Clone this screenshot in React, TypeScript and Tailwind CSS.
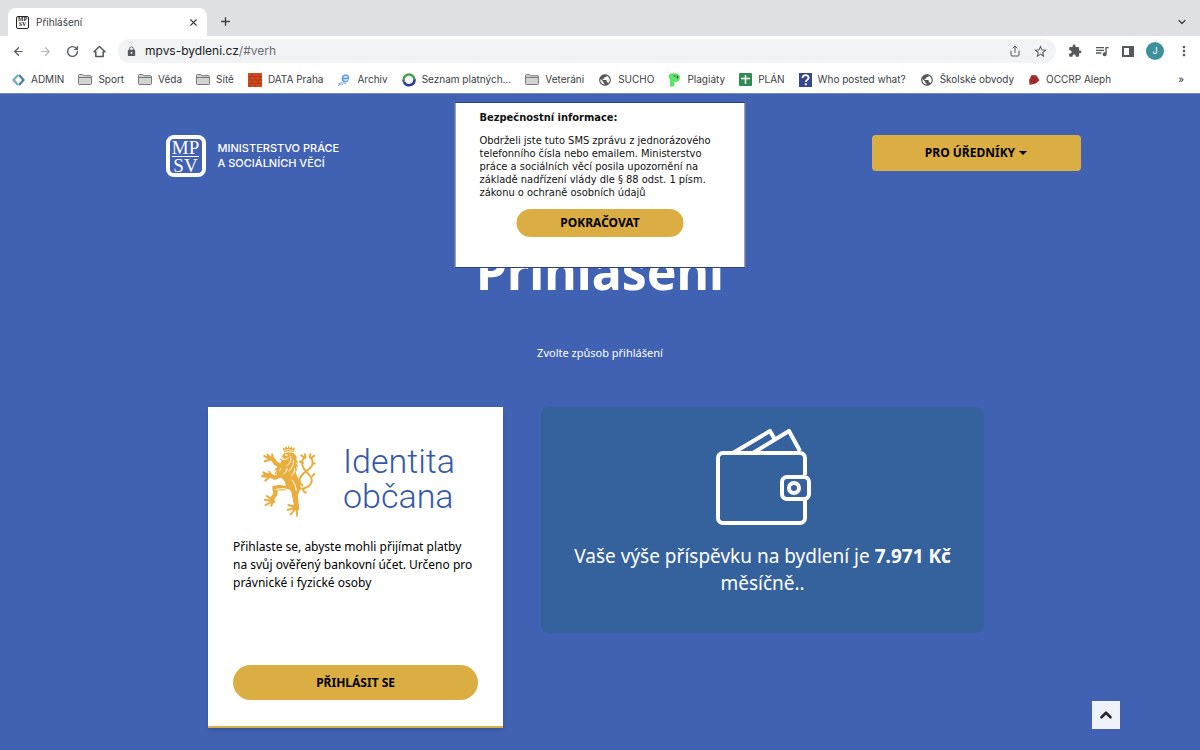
import type { ReactNode } from "react";
import {
  ArrowLeft,
  ArrowRight,
  ChevronDown,
  ChevronUp,
  Plus,
  RotateCw,
  Share,
  X,
} from "lucide-react";
import {
  MdExtension,
  MdLock,
  MdMoreVert,
  MdPublic,
  MdQueueMusic,
  MdStarBorder,
} from "react-icons/md";

interface IBookmark {
  label: string;
  icon: ReactNode;
}

const HomeIcon = () => (
  <svg
    width="13"
    height="13"
    viewBox="0 0 13 13"
    fill="none"
    stroke="currentColor"
    strokeWidth="1.5"
    strokeLinejoin="round"
  >
    <path d="M1 6.8L6.500 1.500 12 6.800H10.200V11.500H2.800V6.800z" />
  </svg>
);

const FolderIcon = () => (
  <svg width="14" height="13" viewBox="0 0 14 13" fill="none">
    <path
      d="M.5 10.5v-8c0-.6.4-1 1-1h3.2l1.2 1.2h6.6c.6 0 1 .4 1 1v6.8c0 .6-.4 1-1 1h-11c-.6 0-1-.4-1-1z"
      fill="#d3d3d3"
      stroke="#77797b"
    />
    <path d="M1 4.5h12" stroke="#77797b" />
  </svg>
);

const AdminIcon = () => (
  <svg width="13" height="12" viewBox="0 0 13 12" fill="none" strokeWidth="2.2">
    <path d="M6 1L1.5 6 6 11" stroke="#6db1c6" />
    <path d="M7 1l4.5 5L7 11" stroke="#477fa5" />
    <path d="M1.5 6l2.6 2.8" stroke="#9aa8b5" />
  </svg>
);

const BrickIcon = () => (
  <svg width="14" height="14" viewBox="0 0 14 14">
    <path d="M0 0h14v14H0z" fill="#cf4a1c" />
    <path
      d="M0 3.5h14M0 7h14M0 10.5h14M4 0v3.5M10 0v3.5M7 3.5V7M2 3.5V7M12 3.5V7M4 7v3.5M10 7v3.5M7 10.5V14M2 10.5V14"
      stroke="#a5381a"
      strokeWidth=".7"
    />
  </svg>
);

const ArchivIcon = () => (
  <svg width="14" height="14" viewBox="0 0 14 14" fill="none">
    <circle cx="8.5" cy="5" r="4.3" fill="#d6e7f7" />
    <path
      d="M5.5 5.5h6c.3-2-1-3.3-2.8-3.3-1.9 0-3.3 1.500-3.300 3.500s1.500 3 3.200 3c1 0 1.900-.4 2.400-1"
      stroke="#5c9bd8"
      strokeWidth="1.300"
    />
    <path d="M1 11.500c2.500-2.200 5.500-2 8-.8M1 13c1-1.700 3-2 5-1.600" stroke="#7cabd8" />
  </svg>
);

const RingIcon = () => (
  <svg width="14" height="14" viewBox="0 0 14 14" fill="none" strokeWidth="2.6">
    <path d="M1.500 7a5.500 5.500 0 0 1 11 0" stroke="#4ba04d" />
    <path d="M12.500 6.500A5.500 5.500 0 0 1 2 9" stroke="#2b3a94" />
    <path d="M1.500 7c0 .8.200 1.400.500 2" stroke="#3b6d88" />
  </svg>
);

const PlagiatyIcon = () => (
  <svg width="13" height="14" viewBox="0 0 13 14">
    <path
      d="M1 1.500C3 .2 9-.4 11 2c1.500 2 1 5.500-1 6.500-1.300.6-2.500.4-3.500.5L6.200 13.500H1.800L2 6C.6 5 .2 3 1 1.500z"
      fill="#5fe36c"
    />
    <path d="M5.500 2.200l5 .8-.6 3-1-1.600-3-.8z" fill="#235c2c" />
    <path d="M6.500 3l2.500.4" stroke="#fff" strokeWidth=".6" />
  </svg>
);

const SheetIcon = () => (
  <svg width="13" height="13" viewBox="0 0 13 13">
    <rect width="13" height="13" rx="1" fill="#2f8b50" />
    <path d="M6.500 2v9M2 5.500h9" stroke="#fff" strokeWidth="1.500" />
  </svg>
);

const QuestionIcon = () => (
  <svg width="13" height="14" viewBox="0 0 13 14" fill="none">
    <path d="M0 0h13v14H0z" fill="#35478f" />
    <path
      d="M3.500 5c0-1.900 1.300-2.800 3-2.800s3.100.9 3.100 2.600c0 2-2.800 2.100-2.800 4.200"
      stroke="#fff"
      strokeWidth="1.800"
    />
    <path d="M5.800 10.300h2v2h-2z" fill="#fff" />
  </svg>
);

const AlephIcon = () => (
  <svg width="12" height="12" viewBox="0 0 12 12">
    <path d="M3.500 1l5 .3 3 5L8 9.500 1.500 11 1 6z" fill="#b23a35" />
    <path
      d="M3 3l7 4M2 5.500l5 3M6 1.500L2.500 9M9 3L5 10"
      stroke="#6e1d1d"
      strokeWidth=".7"
    />
  </svg>
);

const GlobeIcon = () => <MdPublic size={14} className="text-[#55585b]" />;

const bookmarks: IBookmark[] = [
  { label: "ADMIN", icon: <AdminIcon /> },
  { label: "Sport", icon: <FolderIcon /> },
  { label: "Věda", icon: <FolderIcon /> },
  { label: "Sítě", icon: <FolderIcon /> },
  { label: "DATA Praha", icon: <BrickIcon /> },
  { label: "Archiv", icon: <ArchivIcon /> },
  { label: "Seznam platných...", icon: <RingIcon /> },
  { label: "Veteráni", icon: <FolderIcon /> },
  { label: "SUCHO", icon: <GlobeIcon /> },
  { label: "Plagiáty", icon: <PlagiatyIcon /> },
  { label: "PLÁN", icon: <SheetIcon /> },
  { label: "Who posted what?", icon: <QuestionIcon /> },
  { label: "Školské obvody", icon: <GlobeIcon /> },
  { label: "OCCRP Aleph", icon: <AlephIcon /> },
];

const LionIcon = () => (
  <svg
    width="66"
    height="82"
    viewBox="0 0 200 246"
    fill="#e9ae3e"
    stroke="#e9ae3e"
    strokeLinecap="round"
    strokeLinejoin="round"
    strokeWidth="0"
    aria-hidden="true"
  >
    {/* crown */}
    <path d="M88 41l-5-14 8 4 2-8 6 7 3-9 4 9 6-7 2 8 8-4-5 14c-9-3-20-3-29 0z" />
    <path d="M90 36c8-2 16-2 25 0" stroke="#fff" strokeWidth="2" fill="none" />
    {/* head, mane and body */}
    <path d="M88 44c12-4 28-3 34 5l6 12-4 1 7 12-6-1 6 14-6-2 3 14-5-3c0 10 4 18 9 27 6 12 8 24 4 34-3 8-6 12-6 20l3 26-14 3-6-28c-3-11-1-18-10-23-12 2-22 4-34 2l-1 16-15 16-9-7 11-14-3-22c12-6 27-6 41-2 0-10-4-17-12-23l-8-10-10 6 4-11-9 3 8-13-9 3 10-13 4-11 8 5c-3-6-1-9 3-12l-8-3 5-5 10 2-8-7z" />
    {/* gaps in the mane */}
    <g fill="none" stroke="#fff" strokeWidth="3">
      <path d="M79 61c8 5 17 4 21-3M92 50l6 1M107 55c5 10 0 20-10 27M117 68c1 12-6 22-14 31M83 81c-1 8-5 13-9 17M120 92c0 10-4 16-9 21M97 91c-1 8-5 12-10 17" />
      <path d="M112 126c8 10 12 20 13 32M63 155c15-5 30-3 41 2" />
    </g>
    {/* front legs */}
    <path
      d="M81 84L63 76 53 62 41 57M78 112l-19 7-15-8-14 1"
      fill="none"
      strokeWidth="13"
    />
    <path
      d="M48 62L37 48M44 62L28 53M45 65L29 69M54 60l-2-12M43 112l-18-9M41 116l-20-1M45 117l-14 11M49 110l-6-9"
      fill="none"
      strokeWidth="6"
    />
    {/* hind paws */}
    <path
      d="M50 184l-14-9M48 189l-18-3M49 193l-17 9M54 194l-5 10M119 207l-18-5M119 211l-20 6M121 214l-13 16M127 213l0 21"
      fill="none"
      strokeWidth="6"
    />
    <path d="M44 184l14-3 4 13-14 5zM113 202l20-1 1 17-15 1z" />
    {/* tail */}
    <g fill="none" strokeWidth="6">
      <path d="M134 151c17 5 37-8 38-24 1-14-19-25-26-39-6-13-5-24 6-30" />
      <path d="M144 143c-16-13-8-29 7-40 16-12 27-20 23-36-1-5-4-9-8-11" />
      <path d="M150 59l-10-8M153 57l-2-9M166 57l2-10M169 60l10-7M146 74l-10-4M175 76l6 0M146 153c0 8 5 12 9 11M174 114l6-7" />
    </g>
  </svg>
);

const WalletIcon = () => (
  <svg
    width="96"
    height="96"
    viewBox="0 0 96 96"
    fill="none"
    stroke="#fff"
    strokeWidth="4"
    strokeLinejoin="round"
    aria-hidden="true"
  >
    <path d="M90 46V29a5 5 0 0 0-5-5H8a5 5 0 0 0-5 5v60a5 5 0 0 0 5 5h77a5 5 0 0 0 5-5V70" />
    <rect x="67" y="48" width="27" height="22" rx="5" />
    <circle cx="79" cy="59" r="5" />
    <path d="M18 24L55 2l4 7M38 24L74 2l11 20" />
  </svg>
);

const BrowserChrome = () => (
  <header className="bg-white font-['Inter','Liberation_Sans',sans-serif] text-[#3c4043]">
    <div className="flex h-9 items-end bg-[#dee0e4] pl-2">
      <div className="flex h-7 w-[199px] items-center gap-[7px] rounded-t-lg bg-white pr-2 pl-2 text-[10px]">
        <span className="flex h-[13px] w-[13px] flex-col items-center justify-center overflow-hidden rounded-[2px] border border-[#222] font-['Liberation_Serif',serif] text-[6px] leading-[5px] font-bold text-[#222]">
          <span>MP</span>
          <span>SV</span>
        </span>
        <span className="flex-1">Přihlášení</span>
        <button aria-label="Close tab">
          <X size={11} strokeWidth={2.5} />
        </button>
      </div>
      <button className="mb-2 ml-3" aria-label="New tab">
        <Plus size={13} strokeWidth={2.5} />
      </button>
      <button className="mr-3 mb-2 ml-auto" aria-label="Search tabs">
        <ChevronDown size={12} strokeWidth={2.5} />
      </button>
    </div>

    <div className="flex h-[30px] items-center px-3 text-[#55595d]">
      <div className="flex items-center gap-[14px]">
        <button aria-label="Back">
          <ArrowLeft size={13} strokeWidth={2.2} />
        </button>
        <button aria-label="Forward" className="text-[#b6b9bc]">
          <ArrowRight size={13} strokeWidth={2.2} />
        </button>
        <button aria-label="Reload">
          <RotateCw size={13} strokeWidth={2.5} />
        </button>
        <button aria-label="Home">
          <HomeIcon />
        </button>
      </div>
      <div className="ml-3 flex h-6 flex-1 items-center gap-2 rounded-full bg-[#f1f3f4] px-2">
        <MdLock size={11} />
        <p className="flex-1 text-xs text-[#6a6e72]">
          <span className="text-[#202124]">mpvs-bydleni.cz</span>/#verh
        </p>
        <button aria-label="Share">
          <Share size={12} strokeWidth={2} />
        </button>
        <button aria-label="Bookmark this page" className="ml-1">
          <MdStarBorder size={15} />
        </button>
      </div>
      <div className="ml-3 flex items-center gap-3">
        <button aria-label="Extensions">
          <MdExtension size={14} />
        </button>
        <button aria-label="Media">
          <MdQueueMusic size={16} />
        </button>
        <button
          aria-label="Side panel"
          className="h-[11px] w-3 border-2 border-r-[5px] border-[#55595d]"
        />
        <button className="h-[18px] w-[18px] rounded-full bg-[#3b919c] text-[9px] text-white">
          J
        </button>
        <button aria-label="Menu" className="-mr-1">
          <MdMoreVert size={16} />
        </button>
      </div>
    </div>

    <nav className="flex h-7 items-center justify-between border-b border-[#7288c0] px-3 text-[10px]">
      <ul className="flex items-center gap-[14px]">
        {bookmarks.map((bookmark) => (
          <li key={bookmark.label}>
            <a
              href="#"
              className="flex items-center gap-[6px] whitespace-nowrap"
            >
              {bookmark.icon}
              {bookmark.label}
            </a>
          </li>
        ))}
      </ul>
      <button aria-label="More bookmarks" className="mr-1">
        »
      </button>
    </nav>
  </header>
);

const SecurityNotice = () => (
  <div
    role="dialog"
    aria-labelledby="notice-title"
    className="absolute top-2 left-1/2 h-[166px] w-[291px] -translate-x-1/2 border border-[#2c4377] bg-white px-6 pt-[7px] text-black"
  >
    <div className="font-['DejaVu_Sans_Condensed','DejaVu_Sans',sans-serif] text-[11px] text-[#111]">
      <h2 id="notice-title" className="leading-4 font-bold">
        Bezpečnostní informace:
      </h2>
      <p className="mt-2 leading-[13px]">
        Obdrželi jste tuto SMS zprávu z jednorázového
        <br />
        telefonního čísla nebo emailem. Ministerstvo
        <br />
        práce a sociálních věcí posila upozornění na
        <br />
        základě nadřízení vlády dle § 88 odst. 1 písm.
        <br />
        zákonu o ochraně osobních údajů
      </p>
    </div>
    <button className="mx-auto mt-[10px] block h-7 w-[167px] rounded-full bg-[#dbae43] text-xs font-bold">
      POKRAČOVAT
    </button>
  </div>
);

export default function App() {
  return (
    <div className="flex min-h-screen flex-col">
      <BrowserChrome />

      <main className="relative flex-1 bg-[#4161b3] font-['Noto_Sans','Open_Sans',sans-serif] text-white">
        <div className="mx-auto flex max-w-[961px] items-start justify-between pt-[41px] pl-[46px]">
          <a href="#" className="flex items-center gap-3">
            <span className="flex h-[42px] w-10 flex-col items-center justify-center rounded-lg border-4 border-white font-['Liberation_Serif',serif] text-[19px] leading-[17px]">
              <span className="border-b border-white">MP</span>
              <span>SV</span>
            </span>
            <span className="font-['Inter','Liberation_Sans',sans-serif] text-[11px] leading-[15px] font-medium">
              MINISTERSTVO PRÁCE
              <br />A SOCIÁLNÍCH VĚCÍ
            </span>
          </a>
          <button className="flex h-9 w-[209px] items-center justify-center gap-1 rounded bg-[#dbae43] text-xs font-bold text-black">
            PRO ÚŘEDNÍKY
            <span className="border-x-4 border-t-4 border-x-transparent border-t-black" />
          </button>
        </div>

        <h1 className="mt-16 text-center text-[50px] leading-[60px] font-bold">
          Přihlášení
        </h1>
        <p className="mt-11 text-center text-[11px] leading-4">
          Zvolte způsob přihlášení
        </p>

        <div className="mx-auto mt-[46px] grid max-w-[784px] grid-cols-[2fr_3fr] items-start gap-[38px] pr-2">
          <section className="flex h-[321px] flex-col border-b-2 border-[#dbae43] bg-white px-[25px] pt-[31px] pb-[26px] text-black shadow-md">
            <div className="flex items-center gap-[22px] pl-[22px]">
              <LionIcon />
              <p className="font-['Roboto',sans-serif] text-[34px] leading-[35px] font-light text-[#3459a8]">
                Identita
                <br />
                občana
              </p>
            </div>
            <p className="mt-[18px] text-xs leading-[18px]">
              Přihlaste se, abyste mohli přijímat platby
              <br />
              na svůj ověřený bankovní účet. Určeno pro
              <br />
              právnické i fyzické osoby
            </p>
            <button className="mt-auto h-[35px] w-full rounded-full bg-[#dbae43] text-xs font-bold">
              PŘIHLÁSIT SE
            </button>
          </section>

          <section className="flex h-[226px] flex-col items-center rounded-lg bg-[#35619c] px-5 pt-[22px]">
            <WalletIcon />
            <p className="mt-[18px] text-center text-[19px] leading-[27px]">
              Vaše výše příspěvku na bydlení je <strong>7.971 Kč</strong>
              <br />
              měsíčně..
            </p>
          </section>
        </div>

        <SecurityNotice />

        <button
          aria-label="Scroll to top"
          className="absolute right-20 bottom-[21px] flex h-7 w-7 items-center justify-center bg-[#eff2fa] text-[#222831]"
        >
          <ChevronUp size={18} strokeWidth={3.5} />
        </button>
      </main>
    </div>
  );
}
